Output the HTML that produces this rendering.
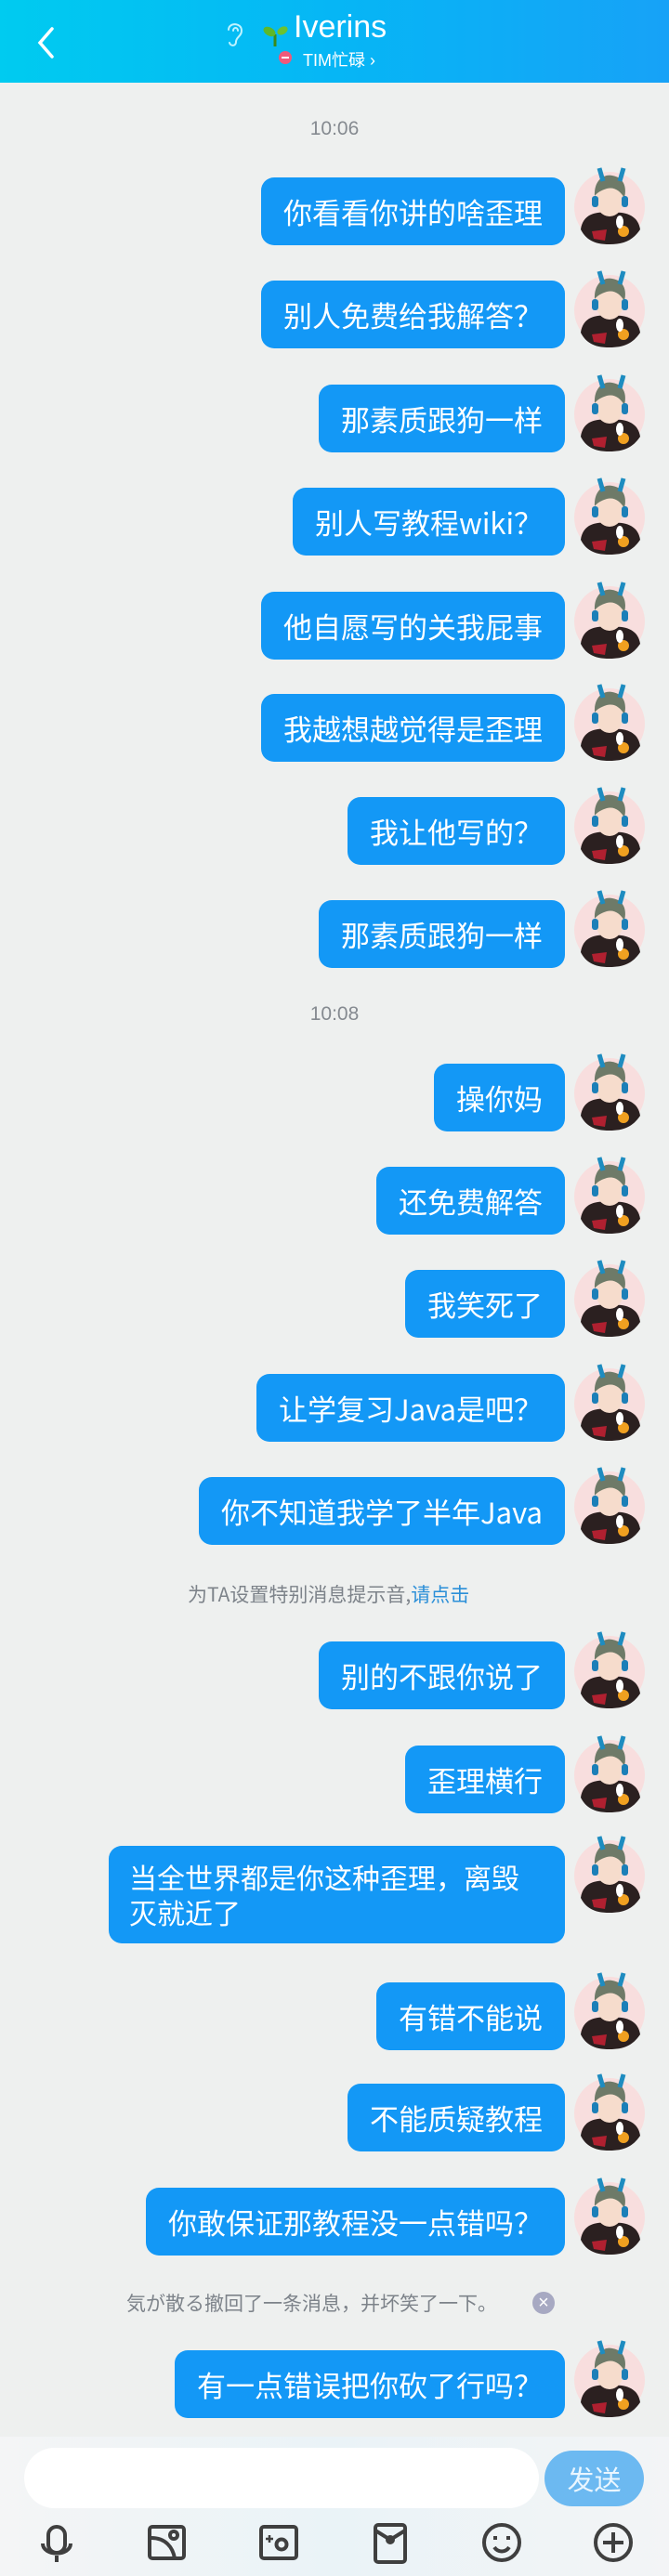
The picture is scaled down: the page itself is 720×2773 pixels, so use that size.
<!DOCTYPE html>
<html><head><meta charset="utf-8"><style>
*{margin:0;padding:0;box-sizing:border-box}
body{width:720px;height:2773px;background:#eef0ef;position:relative;overflow:hidden;font-family:"Liberation Sans","Noto Sans CJK SC",sans-serif}
.hdr{position:absolute;left:0;top:0;width:720px;height:89px;background:linear-gradient(90deg,#00cbf0,#06b6f5 50%,#17a2f7)}
.b{position:absolute;right:112px;height:73px;line-height:73px;background:#1398f6;color:#fff;font-size:31px;border-radius:14px;padding:0 24px;white-space:nowrap;font-family:"Noto Sans CJK SC",sans-serif}
.av{position:absolute;left:615px;width:82px;height:86px}
.t{position:absolute;left:0;width:720px;text-align:center;color:#858a90;font-size:21px}
.n{position:absolute;color:#7d838a;font-size:21px;font-family:"Noto Sans CJK SC",sans-serif}
</style></head><body>
<div class="hdr">
<svg style="position:absolute;left:38px;top:28px" width="24" height="36" viewBox="0 0 24 36"><path d="M18 3 L5 18 L18 33" stroke="#fff" stroke-width="3.5" fill="none" stroke-linecap="round"/></svg>
<svg style="position:absolute;left:242px;top:22px" width="22" height="30" viewBox="0 0 22 30"><path d="M4 10 C4 2 18 2 18 11 C18 17 12 18 12 23 C12 28 6 28 5 24 M9 11 C9 7 14 7 14 11" stroke="#bff3ff" stroke-width="2" fill="none" stroke-linecap="round"/></svg>
<svg style="position:absolute;left:282px;top:22px" width="30" height="30" viewBox="0 0 30 30"><path d="M14 28 L14 15" stroke="#3a8a1a" stroke-width="3"/><ellipse cx="8" cy="12" rx="7" ry="4.5" fill="#5cb82a" transform="rotate(30 8 12)"/><ellipse cx="22" cy="11" rx="6" ry="4" fill="#6cc230" transform="rotate(-30 22 11)"/></svg>
<div style="position:absolute;left:316px;top:10px;color:#fff;font-size:34px">Iverins</div>
<div style="position:absolute;left:300px;top:55px;width:14px;height:14px;border-radius:50%;background:#f0597a"></div>
<div style="position:absolute;left:303px;top:61px;width:8px;height:2px;background:#fff"></div>
<div style="position:absolute;left:326px;top:51px;color:#fff;font-size:18px;font-family:'Liberation Sans','Noto Sans CJK SC',sans-serif">TIM忙碌 ›</div>
</div>
<div class="t" style="top:127px">10:06</div>
<div class="t" style="top:1080px">10:08</div>

<div class="b" style="top:191px">你看看你讲的啥歪理</div>
<div class="b" style="top:302px">别人免费给我解答？</div>
<div class="b" style="top:414px">那素质跟狗一样</div>
<div class="b" style="top:525px">别人写教程wiki？</div>
<div class="b" style="top:637px">他自愿写的关我屁事</div>
<div class="b" style="top:747px">我越想越觉得是歪理</div>
<div class="b" style="top:858px">我让他写的？</div>
<div class="b" style="top:969px">那素质跟狗一样</div>
<div class="b" style="top:1145px">操你妈</div>
<div class="b" style="top:1256px">还免费解答</div>
<div class="b" style="top:1367px">我笑死了</div>
<div class="b" style="top:1479px">让学复习Java是吧？</div>
<div class="b" style="top:1590px">你不知道我学了半年Java</div>
<div class="n" style="left:202px;top:1701px">为TA设置特别消息提示音,<span style="color:#2b8fd8">请点击</span></div>
<div class="b" style="top:1767px">别的不跟你说了</div>
<div class="b" style="top:1879px">歪理横行</div>
<div class="b" style="top:1987px;height:105px;line-height:38px;padding:14px 22px 0;white-space:normal;width:491px;font-size:30px">当全世界都是你这种歪理，离毁灭就近了</div>
<div class="b" style="top:2134px">有错不能说</div>
<div class="b" style="top:2243px">不能质疑教程</div>
<div class="b" style="top:2355px">你敢保证那教程没一点错吗？</div>
<div class="n" style="left:136px;top:2464px">気が散る撤回了一条消息，并坏笑了一下。</div>
<div style="position:absolute;left:573px;top:2467px;width:24px;height:24px;border-radius:50%;background:#a7a9c2;color:#fff;font-size:20px;line-height:24px;text-align:center">×</div>
<div class="b" style="top:2530px">有一点错误把你砍了行吗？</div>

<div style="position:absolute;left:0;top:2623px;width:720px;height:150px;background:linear-gradient(90deg,#f4f5f6,#eaf3f7 50%,#f3f4f6)"></div>
<div style="position:absolute;left:26px;top:2635px;width:554px;height:65px;border-radius:33px;background:#fff"></div>
<div style="position:absolute;left:586px;top:2638px;width:107px;height:60px;border-radius:30px;background:#6cb9f1;color:#eaf6ff;font-size:29px;line-height:60px;text-align:center;font-family:'Noto Sans CJK SC',sans-serif">发送</div>
<svg style="position:absolute;left:0;top:2712px" width="720" height="50" viewBox="0 0 720 50" fill="none" stroke="#3f3f3f" stroke-width="4">
<rect x="52" y="8" width="18" height="28" rx="9"/><path d="M46 26 C46 40 76 40 76 26 M61 39 L61 46"/>
<rect x="161" y="8" width="37" height="34" rx="3"/><path d="M163 20 C178 20 186 30 188 42"/><circle cx="187" cy="17" r="4"/>
<rect x="281" y="8" width="38" height="34" rx="3"/><circle cx="303" cy="27" r="5.5"/><path d="M290 17 L290 25 M286 21 L294 21" stroke-width="2.5"/>
<rect x="404" y="6" width="32" height="40" rx="3"/><path d="M404 12 L420 22 L436 12"/><circle cx="420" cy="22" r="3"/>
<circle cx="540" cy="25" r="19"/><path d="M533 18 L533 22 M547 18 L547 22 M532 30 C536 36 544 36 548 30"/>
<circle cx="660" cy="25" r="19"/><path d="M660 14 L660 36 M649 25 L671 25"/>
</svg>

<svg width="0" height="0" style="position:absolute"><defs><g id="a">
<circle cx="41" cy="46" r="38" fill="#f8dede"/>
<path d="M10 70 C12 56 22 50 41 52 C60 50 72 56 74 70 C66 82 56 86 41 86 C26 86 16 82 10 70Z" fill="#2b2020"/>
<path d="M22 72 L38 70 L36 82 L24 80Z" fill="#b02030"/>
<ellipse cx="41" cy="38" rx="15" ry="18" fill="#f6dccc"/>
<path d="M25 34 C24 16 36 10 44 12 C56 14 60 24 57 36 C52 28 46 24 38 26 C32 28 28 30 25 34Z" fill="#6e7a68"/>
<path d="M30 4 L34 18 M56 4 L52 18" stroke="#1e8cc0" stroke-width="5"/>
<rect x="22" y="34" width="7" height="12" rx="3" fill="#1c7fb8"/><rect x="54" y="34" width="7" height="12" rx="3" fill="#1c7fb8"/>
<circle cx="56" cy="72" r="6" fill="#f0a020"/><ellipse cx="52" cy="62" rx="4" ry="7" fill="#fff"/>
</g></defs></svg>
<svg class="av" style="top:177px"><use href="#a"/></svg>
<svg class="av" style="top:288px"><use href="#a"/></svg>
<svg class="av" style="top:400px"><use href="#a"/></svg>
<svg class="av" style="top:511px"><use href="#a"/></svg>
<svg class="av" style="top:623px"><use href="#a"/></svg>
<svg class="av" style="top:733px"><use href="#a"/></svg>
<svg class="av" style="top:844px"><use href="#a"/></svg>
<svg class="av" style="top:955px"><use href="#a"/></svg>
<svg class="av" style="top:1131px"><use href="#a"/></svg>
<svg class="av" style="top:1242px"><use href="#a"/></svg>
<svg class="av" style="top:1353px"><use href="#a"/></svg>
<svg class="av" style="top:1465px"><use href="#a"/></svg>
<svg class="av" style="top:1576px"><use href="#a"/></svg>
<svg class="av" style="top:1753px"><use href="#a"/></svg>
<svg class="av" style="top:1865px"><use href="#a"/></svg>
<svg class="av" style="top:1973px"><use href="#a"/></svg>
<svg class="av" style="top:2120px"><use href="#a"/></svg>
<svg class="av" style="top:2229px"><use href="#a"/></svg>
<svg class="av" style="top:2341px"><use href="#a"/></svg>
<svg class="av" style="top:2516px"><use href="#a"/></svg>
</body></html>
